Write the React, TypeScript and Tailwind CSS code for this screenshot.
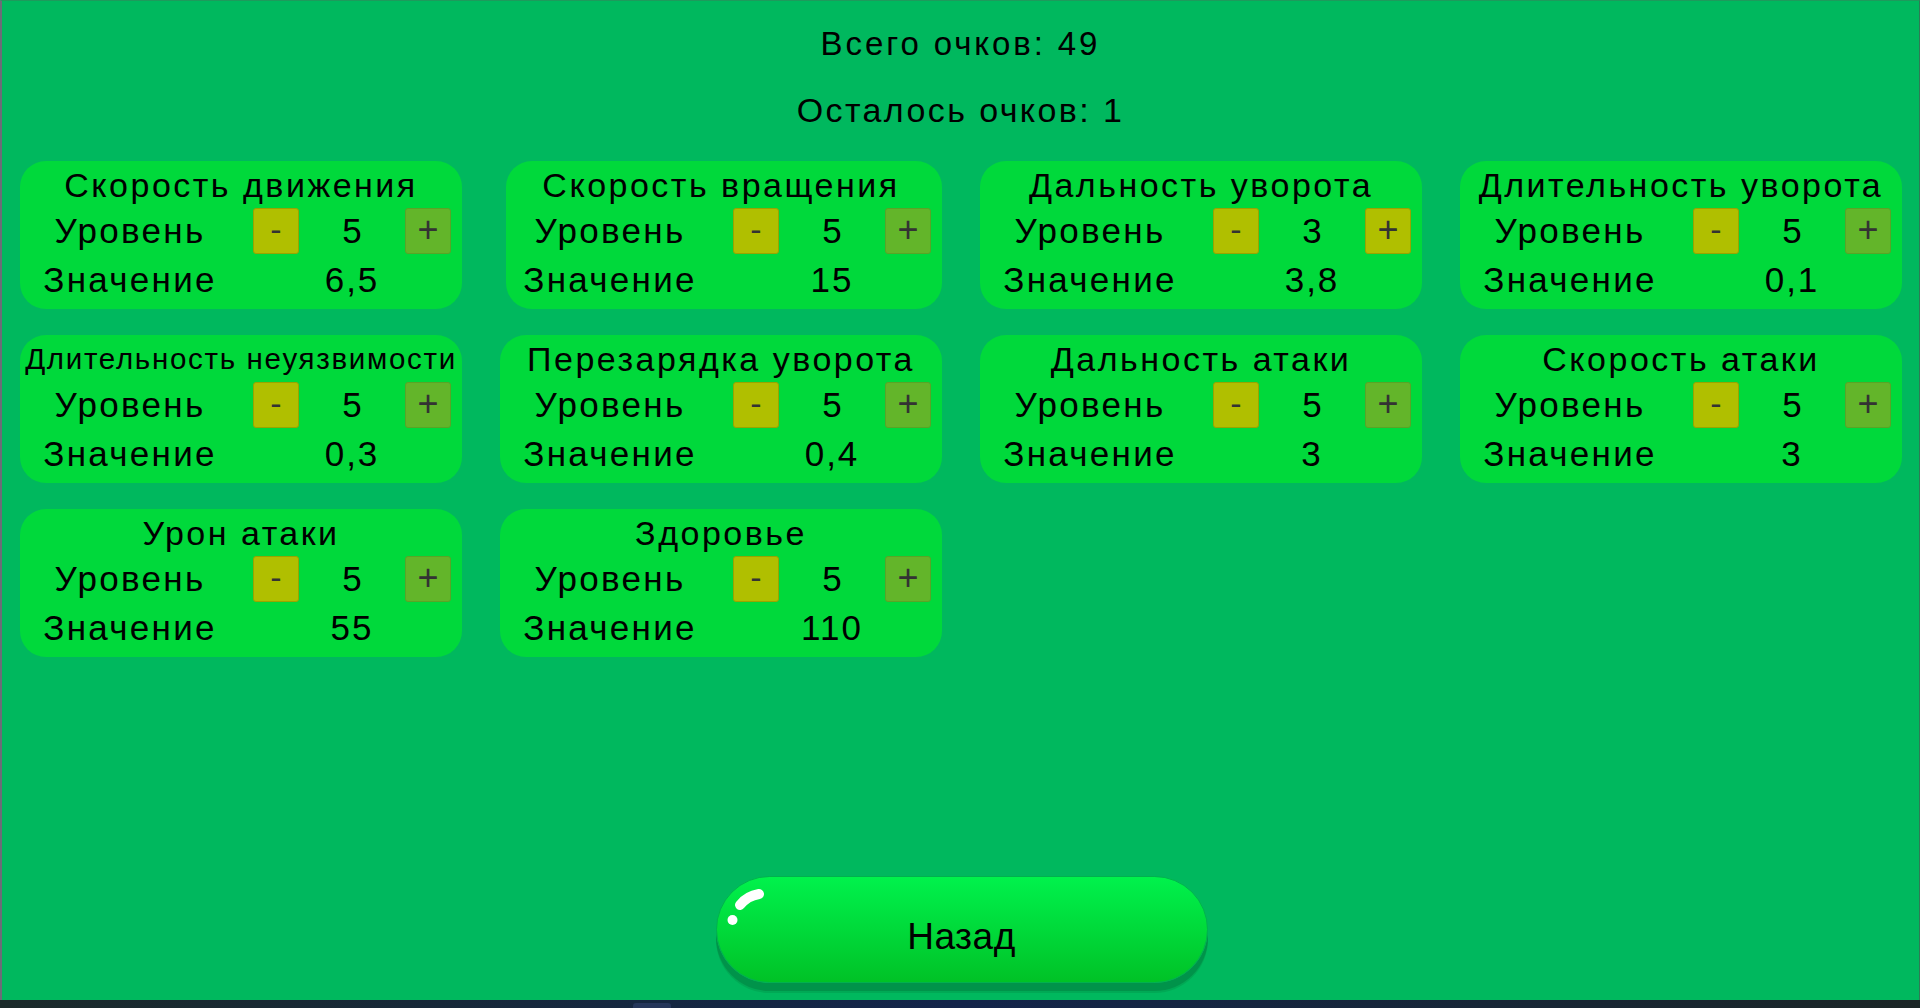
import React from "react";

type Stat = {
  title: string;
  level: string;
  value: string;
  plusActive?: boolean;
  small?: boolean;
  shifted?: boolean;
};

const stats: Stat[] = [
  { title: "Скорость движения", level: "5", value: "6,5" },
  { title: "Скорость вращения", level: "5", value: "15", shifted: true },
  { title: "Дальность уворота", level: "3", value: "3,8", plusActive: true },
  { title: "Длительность уворота", level: "5", value: "0,1" },
  { title: "Длительность неуязвимости", level: "5", value: "0,3", small: true },
  { title: "Перезарядка уворота", level: "5", value: "0,4" },
  { title: "Дальность атаки", level: "5", value: "3" },
  { title: "Скорость атаки", level: "5", value: "3" },
  { title: "Урон атаки", level: "5", value: "55" },
  { title: "Здоровье", level: "5", value: "110" },
];

function StatCard({ s }: { s: Stat }) {
  return (
    <div
      className={
        "h-[148px] rounded-[26px] bg-[#00d93b] pt-[4px] " +
        (s.shifted ? "ml-[6px]" : "")
      }
    >
      <div className={s.shifted ? "-ml-[6px]" : ""}>
        <div
          className={
            "text-center leading-[40px] whitespace-nowrap " +
            (s.small ? "text-[29.5px] tracking-[1.7px]" : "text-[34px] tracking-[2.5px]")
          }
        >
          {s.title}
        </div>
        <div className="mt-[3px] flex h-[46px] items-center">
          <div className="w-[220px] text-center text-[35px] leading-[46px] tracking-[2.3px]">Уровень</div>
          <div className="ml-[13px] flex h-[46px] w-[46px] items-center justify-center rounded-[3px] border border-[#98a400] bg-[#b0bf00] text-[34px] leading-none text-[#333]">
            <span className="-mt-[4px]">-</span>
          </div>
          <div className="w-[106px] text-center text-[35px] leading-[46px]">{s.level}</div>
          <div
            className={
              "flex h-[46px] w-[46px] items-center justify-center rounded-[3px] border text-[36px] leading-none text-[#333] " +
              (s.plusActive
                ? "border-[#98a400] bg-[#b0bf00]"
                : "border-[#58a526] bg-[#63b52a]")
            }
          >
            <span className="-mt-[3px]">+</span>
          </div>
        </div>
        <div className="mt-[6px] flex h-[40px] items-center">
          <div className="w-[220px] text-center text-[35px] leading-[40px] tracking-[2.3px]">Значение</div>
          <div className="ml-[59px] w-[106px] text-center text-[35px] leading-[40px] tracking-[2px]">{s.value}</div>
        </div>
      </div>
    </div>
  );
}

export default function App() {
  return (
    <div
      className="flex h-[1008px] w-full flex-col overflow-hidden text-black"
      style={{ fontFamily: '"Liberation Sans", Arial, sans-serif' }}
    >
      <div className="flex flex-1 flex-col border-l-2 border-r border-t border-l-[#6a6d78] border-r-[#2f7a55] border-t-[#1e9a5c] bg-[#00b85e]">
        <div className="mt-[23px] text-center text-[33px] leading-[40px] tracking-[2.9px]">Всего очков: 49</div>
        <div className="mt-[26px] text-center text-[34px] leading-[40px] tracking-[2.4px]">Осталось очков: 1</div>
        <div className="mt-[31px] grid grid-cols-[repeat(4,442px)] gap-x-[38px] gap-y-[26px] pl-[18px]">
          {stats.map((s) => (
            <StatCard key={s.title} s={s} />
          ))}
        </div>
        <div className="mt-auto mb-[17px] flex justify-center pl-[2px]">
          <div className="relative flex h-[107px] w-[492px] items-center justify-center rounded-full border border-[#00b24e] bg-gradient-to-b from-[#00f24c] to-[#00c226] pt-[14px] text-[37px] leading-none tracking-[0.5px] shadow-[0_8px_0_#00934a,0_10px_0_#00a955]">
            <svg
              className="absolute left-0 top-0"
              width="60"
              height="60"
              viewBox="0 0 60 60"
            >
              <path
                d="M23 28 Q 30 19 42 17"
                stroke="white"
                strokeWidth="10"
                strokeLinecap="round"
                fill="none"
              />
              <circle cx="15.5" cy="43" r="5" fill="white" />
            </svg>
            <span>Назад</span>
          </div>
        </div>
      </div>
      <div className="flex h-[8px] bg-gradient-to-r from-[#1b2a2a] via-[#13244a] to-[#1b2626]">
        <div className="ml-[633px] mt-[3px] h-[5px] w-[38px] rounded-t-[3px] bg-[#25365a]" />
      </div>
    </div>
  );
}
